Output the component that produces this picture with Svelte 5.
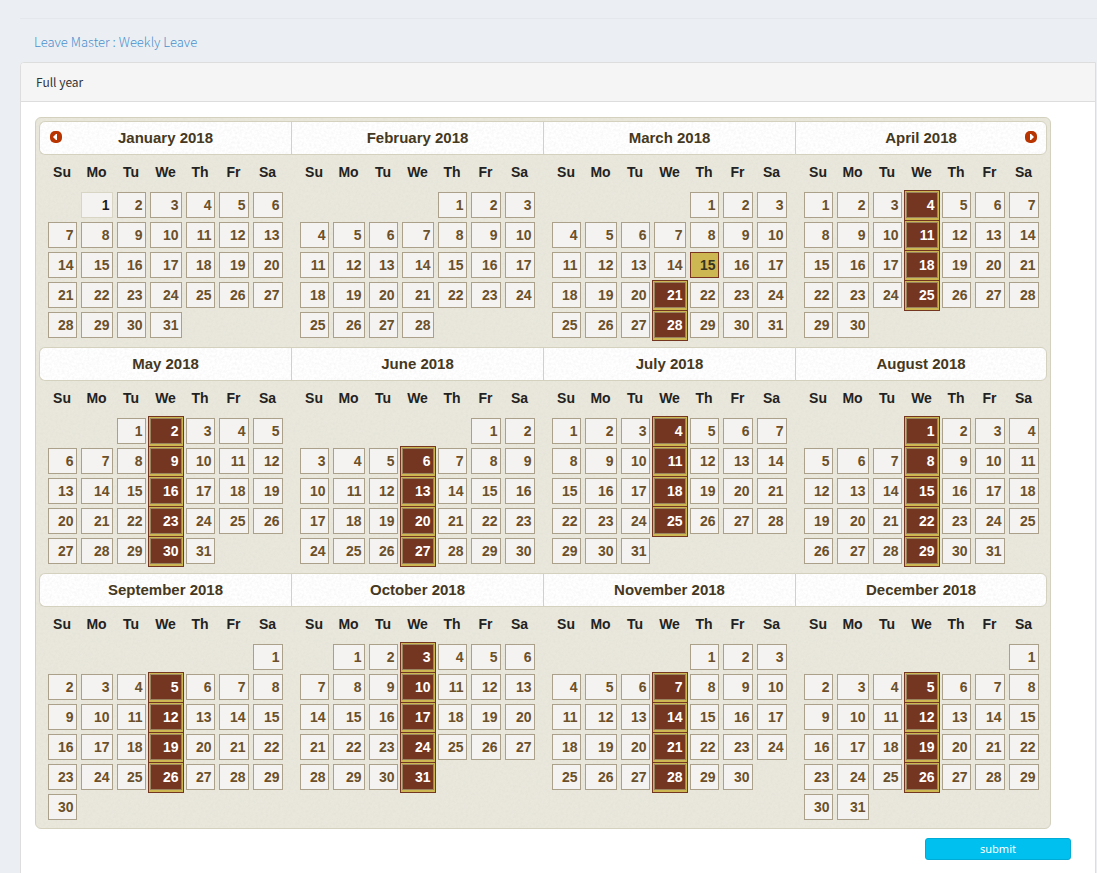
<script>
  const names = ['January', 'February', 'March', 'April', 'May', 'June', 'July', 'August', 'September', 'October', 'November', 'December'];
  const days = ['Su', 'Mo', 'Tu', 'We', 'Th', 'Fr', 'Sa'];
  const year = 2018;
  let picked = $state(
    names.flatMap((_, m) =>
      Array.from({ length: new Date(year, m + 1, 0).getDate() }, (_, i) => i + 1)
        .filter((d) => new Date(year, m, d).getDay() === 3 && (m > 2 || (m === 2 && d > 15)))
        .map((d) => `${m}-${d}`)
    )
  );
  const months = names.map((name, m) => {
    const first = new Date(year, m, 1).getDay();
    const count = new Date(year, m + 1, 0).getDate();
    const weeks = [];
    for (let start = 1 - first; start <= count; start += 7) {
      weeks.push(days.map((_, i) => (start + i > 0 && start + i <= count ? start + i : 0)));
    }
    return { name, weeks };
  });
  function toggle(key) {
    picked = picked.includes(key) ? picked.filter((k) => k !== key) : [...picked, key];
  }
</script>

<main>
  <h1><a href="#leave">Leave Master : Weekly Leave</a></h1>
  <section class="panel">
    <header>Full year</header>
    <div class="body">
      <div class="calendar">
        {#each months as month, m}
          <div class="month">
            <div class="title">
              {#if m === 0}
                <button class="nav prev" aria-label="Prev"><svg viewBox="0 0 12 12"><rect width="12" height="12" rx="5" /><path class="arrow" d="M7 3v6H6L3.500 6.500v-1L6 3z" /></svg></button>
              {/if}
              {month.name} {year}
              {#if m === 3}
                <button class="nav next" aria-label="Next"><svg viewBox="0 0 12 12"><rect width="12" height="12" rx="5" /><path class="arrow" d="M5 3v6h1l2.500-2.500v-1L6 3z" /></svg></button>
              {/if}
            </div>
            <table>
              <colgroup><col class="c33" /><col class="c36" /><col class="c33" /><col class="c36" /><col class="c33" /><col class="c34" /><col class="c34" /></colgroup>
              <thead><tr>{#each days as d}<th>{d}</th>{/each}</tr></thead>
              <tbody>
                {#each month.weeks as week}
                  <tr>
                    {#each week as d}
                      <td>
                        {#if d}
                          <button
                            class="day"
                            class:picked={picked.includes(`${m}-${d}`)}
                            class:current={m === 0 && d === 1}
                            class:today={m === 2 && d === 15}
                            onclick={() => toggle(`${m}-${d}`)}>{d}</button>
                        {/if}
                      </td>
                    {/each}
                  </tr>
                {/each}
              </tbody>
            </table>
          </div>
        {/each}
      </div>
      <div class="actions"><button class="submit">submit</button></div>
    </div>
  </section>
</main>

<style>
  :global(body) { margin: 0; background: #ebeff4; }
  main { padding: 18px 0 0 20px; font: 14px/20px "Noto Sans CJK JP", "Noto Sans", sans-serif; color: #333; }
  h1 { margin: 0; padding: 13px 14px 10px; border-top: 1px solid #e4e8ec; font-size: 13px; line-height: 20px; font-weight: 300; }
  h1 a { color: #4a8fcc; text-decoration: none; }
  .panel { margin-right: 1px; border: 1px solid #ddd; border-radius: 4px 0 0 0; background: #fff; overflow: hidden; }
  .panel header { padding: 9px 15px; border-bottom: 1px solid #ddd; background: #f5f5f5; font-size: 12px; }
  .body { padding: 15px 15px 20px 14px; }
  .calendar {
    box-sizing: border-box; display: grid; grid-template-columns: repeat(4, 1fr); max-width: 1016px;
    padding: 3px; border: 1px solid #d4d1bf; border-radius: 6px;
    background: #eae8dd url("data:image/svg+xml,%3Csvg xmlns='http://www.w3.org/2000/svg' width='100' height='100'%3E%3Cfilter id='n'%3E%3CfeTurbulence type='fractalNoise' baseFrequency='.4' numOctaves='3' stitchTiles='stitch'/%3E%3CfeColorMatrix values='0 0 0 0 .45 0 0 0 0 .45 0 0 0 0 .35 .14 0 0 0 -.04'/%3E%3C/filter%3E%3Crect width='100' height='100' filter='url(%23n)'/%3E%3C/svg%3E");
    font-family: "Liberation Sans", Arial, sans-serif;
  }
  .title {
    position: relative; box-sizing: border-box; height: 34px; border: 1px solid #d4d1bf; border-right-width: 0;
    background: #fff url("data:image/svg+xml,%3Csvg xmlns='http://www.w3.org/2000/svg' width='100' height='100'%3E%3Cfilter id='n'%3E%3CfeTurbulence type='fractalNoise' baseFrequency='.4' numOctaves='3' stitchTiles='stitch'/%3E%3CfeColorMatrix values='0 0 0 0 .4 0 0 0 0 .4 0 0 0 0 .4 .2 0 0 0 -.07'/%3E%3C/filter%3E%3Crect width='100' height='100' filter='url(%23n)'/%3E%3C/svg%3E");
    color: #453821; font-size: 15px; line-height: 32px; font-weight: bold; text-align: center;
  }
  .month:nth-child(4n + 1) .title { border-radius: 6px 0 0 6px; }
  .month:nth-child(4n) .title { border-right-width: 1px; border-radius: 0 6px 6px 0; }
  .nav { position: absolute; top: 9px; width: 12px; height: 12px; padding: 0; border: 0; background: none; }
  .prev { left: 10px; }
  .next { right: 9px; }
  .nav svg { display: block; width: 12px; height: 12px; fill: #b83400; }
  .nav .arrow { fill: #fff; }
  table { width: 239px; margin: 0 auto 7px; border-collapse: collapse; table-layout: fixed; }
  .month:nth-child(n + 9) table { margin-bottom: 3px; }
  .c33 { width: 33px; }
  .c34 { width: 34px; }
  .c36 { width: 36px; }
  th { height: 35px; padding: 0; color: #222; font-size: 14px; line-height: 35px; }
  td { height: 26px; padding: 2px; }
  .day {
    display: block; box-sizing: border-box; width: 100%; height: 26px; padding: 0 2px 0 0;
    border: 1px solid #aba18a; border-radius: 0; background: #f5f3f2; color: #6b5029;
    font: bold 14px/24px "Liberation Sans", Arial, sans-serif; text-align: right;
  }
  .current { border-color: #d8d5c5; color: #1c1c1c; }
  .today { border-color: #7a3520; background: #ccb753; color: #3a3420; }
  .picked {
    border-color: #9a8560; background: #743620; color: #fff;
    box-shadow: 0 0 0 1px #ccb753, 0 1px 0 1px #ccb753, 0 0 0 2px #743620, 0 1px 0 2px #743620;
  }
  .actions { display: flex; justify-content: flex-end; padding: 9px 9px 0 0; }
  .submit {
    width: 146px; height: 22px; padding: 0; border: 1px solid #00acd6; border-radius: 3px;
    background: #00c0ef; color: #fff; font: 11px/18px "Noto Sans", sans-serif;
  }
</style>
